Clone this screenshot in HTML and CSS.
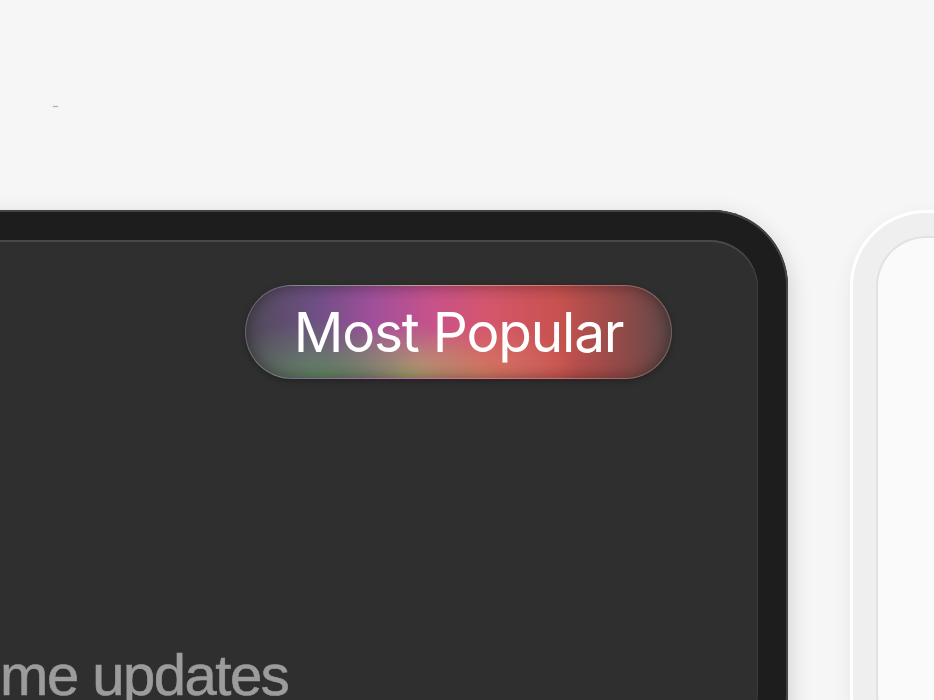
FILE: index.html
```html
<!DOCTYPE html>
<html lang="en">
<head>
  <meta charset="UTF-8">
  <title>Pricing</title>
  <link rel="stylesheet" href="styles.css">
</head>
<body>
  <div class="top">
    <span class="dash"></span>
  </div>

  <div class="plans">
    <div class="plan plan-dark">
      <div class="plan-inner">
        <div class="plan-head">
          <span class="badge">Most Popular</span>
        </div>
        <h2 class="plan-title">Real-time updates</h2>
      </div>
    </div>

    <div class="plan plan-light">
      <div class="plan-inner"></div>
    </div>
  </div>
</body>
</html>
```

FILE: styles.css
```css
* {
  box-sizing: border-box;
}

body {
  margin: 0;
  background: #f6f6f6;
  font-family: 'Inter', 'Liberation Sans', sans-serif;
  height: 700px;
  overflow: hidden;
}

.top {
  height: 210px;
  padding: 106px 0 0 53px;
}

.dash {
  display: block;
  width: 5px;
  height: 1px;
  background: #c9a3c6;
  box-shadow: 0 0 2px rgba(220, 140, 220, 0.6);
}

.plans {
  display: flex;
  gap: 62px;
  margin-left: -227px;
}

.plan {
  flex: none;
  height: 560px;
  padding: 30px;
  border-radius: 76px;
}

.plan-dark {
  width: 1015px;
  background: #1d1d1d;
  box-shadow: inset 0 0 0 2px #444, 0 8px 24px rgba(0, 0, 0, 0.18);
}

.plan-dark .plan-inner {
  background: #2f2f2f;
  box-shadow: inset 0 2px 0 #484848, inset 0 0 0 1px #393939;
}

.plan-light {
  width: 400px;
  padding: 28px;
  background: #efefef;
  box-shadow: inset 0 0 0 3px #ffffff, 0 6px 20px rgba(0, 0, 0, 0.06);
}

.plan-light .plan-inner {
  background: #fafafa;
  box-shadow: 0 0 0 2px #e2e2e2;
}

.plan-inner {
  height: 100%;
  border-radius: 48px;
  padding: 45px 86px 0 40px;
  display: flex;
  flex-direction: column;
}

.plan-head {
  display: flex;
  justify-content: flex-end;
}

.badge {
  display: inline-flex;
  align-items: center;
  justify-content: center;
  width: 427px;
  height: 94px;
  border-radius: 47px;
  border: 1px solid rgba(255, 255, 255, 0.16);
  color: #fff;
  font-size: 55px;
  font-weight: 400;
  letter-spacing: -1.2px;
  background:
    radial-gradient(ellipse 24% 65% at 18% 100%, rgba(96, 138, 94, 0.95), transparent),
    radial-gradient(ellipse 20% 60% at 38% 100%, rgba(172, 166, 106, 0.9), transparent),
    radial-gradient(ellipse 22% 60% at 56% 100%, rgba(212, 124, 94, 0.9), transparent),
    linear-gradient(90deg, #4f4a55 0%, #6d4f84 16%, #a0509a 30%, #c8528b 44%, #d4566c 57%, #c9524f 73%, #8f4a48 89%, #5f4848 100%);
  box-shadow: inset 0 0 16px rgba(0, 0, 0, 0.4), 0 2px 6px rgba(0, 0, 0, 0.3);
}

.plan-title {
  margin: 262px 0 0;
  font-family: 'Liberation Sans', Arial, sans-serif;
  font-size: 58px;
  font-weight: 400;
  letter-spacing: -1.5px;
  color: #9c9c9c;
  -webkit-text-stroke: 0.6px #9c9c9c;
  white-space: nowrap;
}
```
